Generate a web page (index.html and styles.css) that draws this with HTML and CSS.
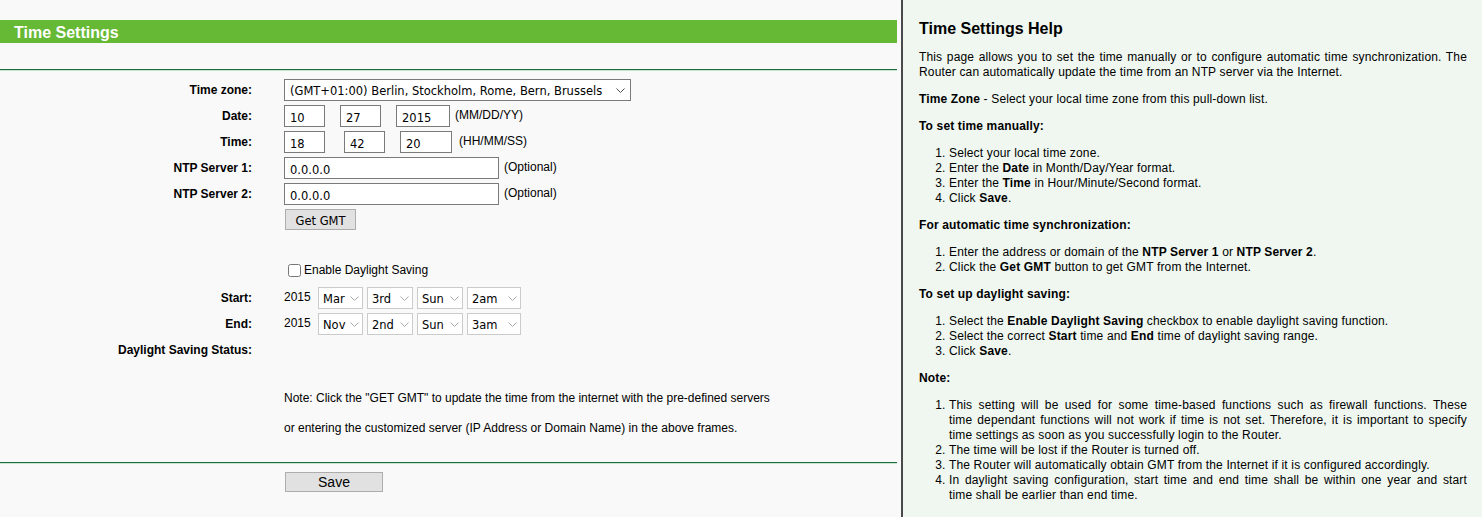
FILE: index.html
```html
<!DOCTYPE html>
<html lang="en">

<head>
    <meta charset="UTF-8">
    <title>Time Settings</title>
    <link rel="stylesheet" href="styles.css">
</head>

<body>
    <div class="main">
        <div class="title-bar">Time Settings</div>
        <div class="rule rule-top"></div>

        <div class="form">
            <div class="row">
                <label class="lbl">Time zone:</label>
                <div class="field">
                    <span class="sel">
                        <select class="tz">
                            <option>(GMT+01:00) Berlin, Stockholm, Rome, Bern, Brussels</option>
                        </select>
                        <svg class="chev" width="9" height="5" viewBox="0 0 9 5"><path d="M0.5 0.5 L4.5 4.5 L8.5 0.5" fill="none" stroke="#505050" stroke-width="1"/></svg>
                    </span>
                </div>
            </div>
            <div class="row">
                <label class="lbl">Date:</label>
                <div class="field">
                    <input class="txt w40" type="text" value="10">
                    <input class="txt w40 gap-d" type="text" value="27">
                    <input class="txt w54 gap-d" type="text" value="2015">
                    <span class="hint">(MM/DD/YY)</span>
                </div>
            </div>
            <div class="row">
                <label class="lbl">Time:</label>
                <div class="field">
                    <input class="txt w40" type="text" value="18">
                    <input class="txt w40 gap-t" type="text" value="42">
                    <input class="txt w52 gap-d" type="text" value="20">
                    <span class="hint hint-t">(HH/MM/SS)</span>
                </div>
            </div>
            <div class="row">
                <label class="lbl">NTP Server 1:</label>
                <div class="field">
                    <input class="txt w214" type="text" value="0.0.0.0">
                    <span class="hint">(Optional)</span>
                </div>
            </div>
            <div class="row">
                <label class="lbl">NTP Server 2:</label>
                <div class="field">
                    <input class="txt w214" type="text" value="0.0.0.0">
                    <span class="hint">(Optional)</span>
                </div>
            </div>
            <div class="row row-btn">
                <span></span>
                <div class="field">
                    <button class="btn btn-gmt" type="button">Get GMT</button>
                </div>
            </div>

            <div class="row row-check">
                <span></span>
                <div class="field">
                    <label class="check"><input type="checkbox">Enable Daylight Saving</label>
                </div>
            </div>
            <div class="row">
                <label class="lbl">Start:</label>
                <div class="field">
                    <span class="year">2015</span>
                    <span class="sel small"><select class="s45"><option>Mar</option></select><svg class="chev" width="9" height="5" viewBox="0 0 9 5"><path d="M0.5 0.5 L4.5 4.5 L8.5 0.5" fill="none" stroke="#a8a8a8" stroke-width="1"/></svg></span>
                    <span class="sel small"><select class="s46"><option>3rd</option></select><svg class="chev" width="9" height="5" viewBox="0 0 9 5"><path d="M0.5 0.5 L4.5 4.5 L8.5 0.5" fill="none" stroke="#a8a8a8" stroke-width="1"/></svg></span>
                    <span class="sel small"><select class="s46"><option>Sun</option></select><svg class="chev" width="9" height="5" viewBox="0 0 9 5"><path d="M0.5 0.5 L4.5 4.5 L8.5 0.5" fill="none" stroke="#a8a8a8" stroke-width="1"/></svg></span>
                    <span class="sel small"><select class="s54"><option>2am</option></select><svg class="chev" width="9" height="5" viewBox="0 0 9 5"><path d="M0.5 0.5 L4.5 4.5 L8.5 0.5" fill="none" stroke="#a8a8a8" stroke-width="1"/></svg></span>
                </div>
            </div>
            <div class="row">
                <label class="lbl">End:</label>
                <div class="field">
                    <span class="year">2015</span>
                    <span class="sel small"><select class="s45"><option>Nov</option></select><svg class="chev" width="9" height="5" viewBox="0 0 9 5"><path d="M0.5 0.5 L4.5 4.5 L8.5 0.5" fill="none" stroke="#a8a8a8" stroke-width="1"/></svg></span>
                    <span class="sel small"><select class="s46"><option>2nd</option></select><svg class="chev" width="9" height="5" viewBox="0 0 9 5"><path d="M0.5 0.5 L4.5 4.5 L8.5 0.5" fill="none" stroke="#a8a8a8" stroke-width="1"/></svg></span>
                    <span class="sel small"><select class="s46"><option>Sun</option></select><svg class="chev" width="9" height="5" viewBox="0 0 9 5"><path d="M0.5 0.5 L4.5 4.5 L8.5 0.5" fill="none" stroke="#a8a8a8" stroke-width="1"/></svg></span>
                    <span class="sel small"><select class="s54"><option>3am</option></select><svg class="chev" width="9" height="5" viewBox="0 0 9 5"><path d="M0.5 0.5 L4.5 4.5 L8.5 0.5" fill="none" stroke="#a8a8a8" stroke-width="1"/></svg></span>
                </div>
            </div>
            <div class="row row-status">
                <label class="lbl">Daylight Saving Status:</label>
                <div class="field"></div>
            </div>

            <div class="note">
                <p>Note: Click the "GET GMT" to update the time from the internet with the pre-defined servers</p>
                <p>or entering the customized server (IP Address or Domain Name) in the above frames.</p>
            </div>
        </div>

        <div class="rule rule-bottom"></div>
        <div class="actions">
            <button class="btn btn-save" type="button">Save</button>
        </div>
    </div>

    <div class="help">
        <h2>Time Settings Help</h2>
        <p class="just">This page allows you to set the time manually or to configure automatic time synchronization. The Router can automatically update the time from an NTP server via the Internet.</p>
        <p><b>Time Zone</b> - Select your local time zone from this pull-down list.</p>
        <p><b>To set time manually:</b></p>
        <ol>
            <li>Select your local time zone.</li>
            <li>Enter the <b>Date</b> in Month/Day/Year format.</li>
            <li>Enter the <b>Time</b> in Hour/Minute/Second format.</li>
            <li>Click <b>Save</b>.</li>
        </ol>
        <p><b>For automatic time synchronization:</b></p>
        <ol>
            <li>Enter the address or domain of the <b>NTP Server 1</b> or <b>NTP Server 2</b>.</li>
            <li>Click the <b>Get GMT</b> button to get GMT from the Internet.</li>
        </ol>
        <p><b>To set up daylight saving:</b></p>
        <ol>
            <li>Select the <b>Enable Daylight Saving</b> checkbox to enable daylight saving function.</li>
            <li>Select the correct <b>Start</b> time and <b>End</b> time of daylight saving range.</li>
            <li>Click <b>Save</b>.</li>
        </ol>
        <p><b>Note:</b></p>
        <ol>
            <li><span class="line">This setting will be used for some time-based functions such as firewall functions. These</span><span class="line">time dependant functions will not work if time is not set. Therefore, it is important to specify</span>time settings as soon as you successfully login to the Router.</li>
            <li>The time will be lost if the Router is turned off.</li>
            <li>The Router will automatically obtain GMT from the Internet if it is configured accordingly.</li>
            <li><span class="line">In daylight saving configuration, start time and end time shall be within one year and start</span>time shall be earlier than end time.</li>
        </ol>
    </div>
</body>

</html>
```

FILE: styles.css
```css
/* Router page */
html,
body {
    margin: 0;
    padding: 0;
    height: 517px;
    overflow: hidden;
}

body {
    display: flex;
    font-family: "Liberation Sans", Arial, sans-serif;
    font-size: 12px;
    color: #000;
    background-color: #f9f9f9;
}

.main {
    width: 897px;
    padding-top: 20px;
    margin-right: 4px;
    flex-shrink: 0;
}

.title-bar {
    height: 23px;
    line-height: 25px;
    background-color: #66b934;
    color: white;
    font-weight: bold;
    font-size: 16px;
    padding-left: 14px;
}

.rule {
    border-top: 1px solid #1f6b41;
    border-bottom: 1px solid #c4e6cd;
}

.rule-top {
    margin-top: 26px;
}

.form {
    padding-top: 8px;
}

.row {
    display: grid;
    grid-template-columns: 252px 1fr;
    column-gap: 32px;
    align-items: center;
    height: 22px;
    margin-bottom: 4px;
}

.lbl {
    text-align: right;
    font-weight: bold;
}

.field {
    display: flex;
    align-items: center;
}

.txt {
    box-sizing: border-box;
    height: 22px;
    border: 1px solid #7a7a7a;
    background: white;
    padding: 3px 0 0 5px;
    margin: 0;
    font-family: "DejaVu Sans", Verdana, sans-serif;
    font-size: 11.5px;
    color: #000;
}

.w40 { width: 41px; }
.w52 { width: 52px; }
.w54 { width: 54px; }
.w214 { width: 215px; }
.gap-d { margin-left: 15px; }
.gap-t { margin-left: 19px; }

.hint {
    margin-left: 5px;
    margin-top: -3px;
}

.hint-t {
    margin-left: 7px;
}

.sel {
    position: relative;
    display: inline-block;
}

.sel select {
    appearance: none;
    -webkit-appearance: none;
    box-sizing: border-box;
    height: 22px;
    margin: 0;
    border: 1px solid #7a7a7a;
    border-radius: 0;
    background: white;
    color: #000;
    padding: 2px 0 0 5px;
    font-family: "DejaVu Sans", Verdana, sans-serif;
    font-size: 11.5px;
}

.tz {
    width: 347px;
}

.chev {
    position: absolute;
    right: 6px;
    top: 9px;
    pointer-events: none;
}

.small {
    margin-right: 4px;
}

.small select {
    border-color: #cbcbcb;
    padding-left: 4px;
}

.small .chev {
    right: 4px;
}

.s45 { width: 45px; }
.s46 { width: 46px; }
.s54 { width: 54px; }

.year {
    width: 34px;
    margin-top: -3px;
}

.btn {
    box-sizing: border-box;
    background-color: #e1e1e1;
    border: 1px solid #adadad;
    border-radius: 0;
    color: #000;
    font-family: "DejaVu Sans", Verdana, sans-serif;
    padding: 0;
    margin: 0;
}

.btn-gmt {
    width: 71px;
    height: 21px;
    margin-left: 1px;
    font-size: 11.5px;
    padding-top: 2px;
}

.row-btn {
    height: 21px;
}

.row-check {
    margin-top: 31px;
    height: 18px;
    margin-bottom: 8px;
}

.check {
    display: flex;
    align-items: center;
}

.check input {
    width: 13px;
    height: 13px;
    margin: 0 3px 0 4px;
}

.row-status {
    height: 18px;
    margin-top: 6px;
}

.note {
    margin-top: 24px;
    padding-left: 284px;
}

.note p {
    margin: 0;
    line-height: 30px;
}

.rule-bottom {
    margin-top: 19px;
}

.actions {
    padding: 8px 0 0 285px;
}

.btn-save {
    width: 98px;
    height: 20px;
    font-family: "Liberation Sans", Arial, sans-serif;
    font-size: 14px;
    line-height: 18px;
}

/* Help frame */
.help {
    flex: 1;
    border-left: 2px solid #4a4a4a;
    background-color: #eff7f0;
    padding: 19px 15px 0 16px;
    line-height: 15px;
    letter-spacing: 0.15px;
}

.help h2 {
    font-size: 16px;
    line-height: 20px;
    letter-spacing: 0;
    margin: 0 0 11px;
}

.help p {
    margin: 12px 0;
}

.help h2 + p {
    margin-top: 0;
}

.help ol {
    margin: 11px 0 12px;
    padding-left: 30px;
}

.just {
    text-align: justify;
}

/* justified help lines, broken where the router page breaks them */
.line {
    display: block;
    text-align: justify;
    text-align-last: justify;
}
```
